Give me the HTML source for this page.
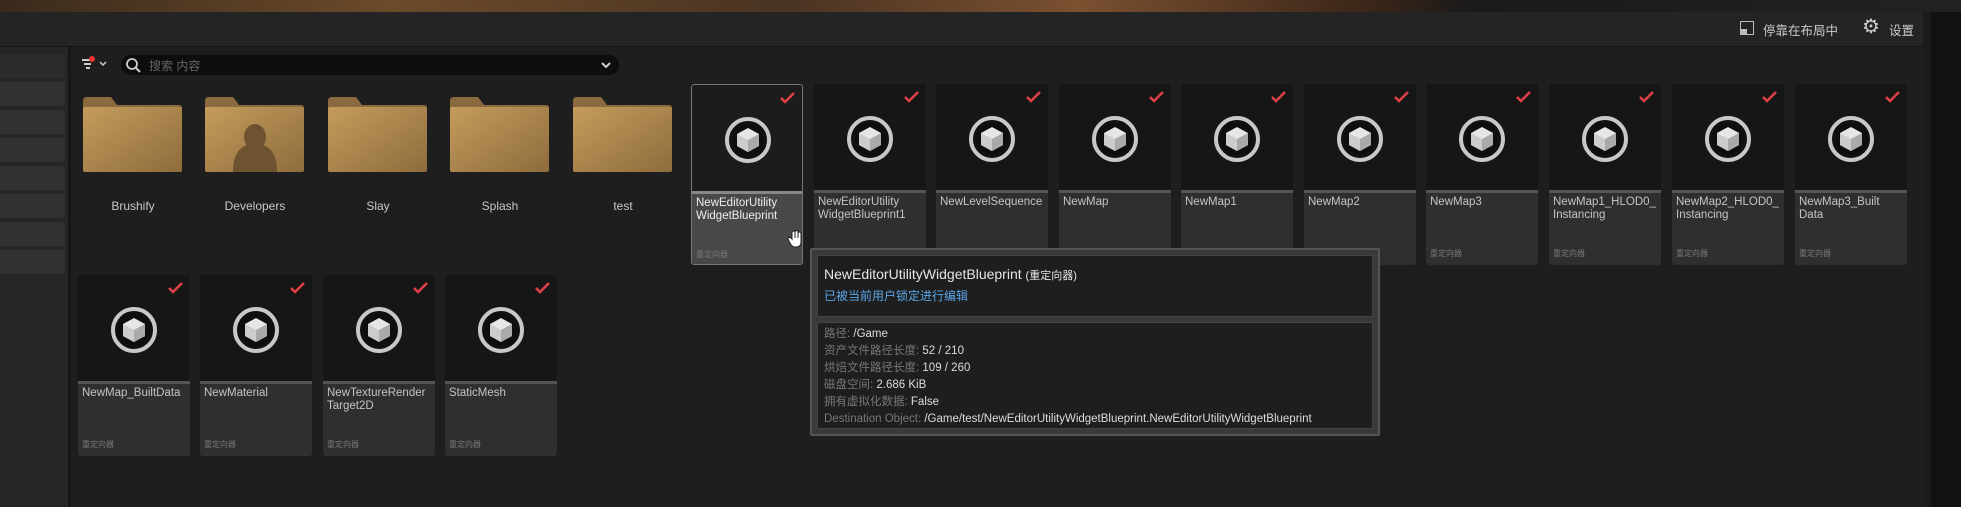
<!DOCTYPE html>
<html><head><meta charset="utf-8"><style>
*{margin:0;padding:0;box-sizing:border-box}
body{width:1961px;height:507px;overflow:hidden;background:#1e1e1e;position:relative;font-family:"Liberation Sans","Noto Sans CJK SC",sans-serif;color:#ccc}
.abs{position:absolute}
.top{left:0;top:0;width:1961px;height:12px;background:linear-gradient(90deg,#3a2a1c,#6b4a2a 20%,#4a3322 40%,#7a5030 55%,#3a2518 70%,#1a1a1a 75%,#222 100%)}
.hdr{left:0;top:12px;width:1923px;height:35px;background:#242424;border-bottom:1px solid #151515}
.right{left:1923px;top:12px;width:38px;height:495px;background:#111}
.side{left:0;top:47px;width:68px;height:460px;background:#262626}
.row{left:0;width:65px;height:24px;background:#313131;border-radius:0 3px 3px 0}
.div{left:68px;top:47px;width:3px;height:460px;background:#161616}
.search{left:121px;top:55px;width:498px;height:20px;background:#0d0d0d;border-radius:10px}
.flab{font-size:12px;color:#c8c8c8;text-align:center;width:100px}
.tile{width:112px;height:181px;background:#161616;border-radius:3px;overflow:hidden}
.tile .bar{position:absolute;left:0;top:106px;width:112px;height:3px;background:#555}
.tile .lab{position:absolute;left:0;top:109px;width:112px;height:72px;background:#2f2f2f;padding:3px 4px;font-size:11.5px;line-height:13px;color:#c4c4c4}
.tile .sm{position:absolute;left:4px;bottom:5px;font-size:8px;color:#777}
.tile .chk{position:absolute;right:6px;top:6px}
.tile .ic{position:absolute;left:33px;top:32px}
.tip{left:810px;top:248px;width:570px;height:188px;background:#3a3a3a;border:2px solid #555;border-radius:2px}
.tip .a{position:absolute;left:5px;top:5px;width:556px;height:62px;background:#1e1e1e;border:1px solid #444}
.tip .b{position:absolute;left:5px;top:72px;width:556px;height:107px;background:#1e1e1e;border:1px solid #444;padding:3px 6px;font-size:11.5px;line-height:17px;color:#ddd}
.g{color:#777}
</style></head><body>
<div class="abs top"></div>
<div class="abs hdr"></div>
<div class="abs right"><div style="position:absolute;left:0;top:0;width:8px;height:495px;background:#1b1b1b"></div></div>
<div class="abs" style="left:1740px;top:21px;width:14px;height:14px;border:1px solid #bbb;background:linear-gradient(#bbb 0 0) 0 7px/6px 6px no-repeat"></div>
<div class="abs" style="left:1763px;top:20px;font-size:12.5px;color:#ccc">停靠在布局中</div>
<div class="abs" style="left:1862px;top:16px;font-size:20px;line-height:22px;color:#ccc">⚙</div>
<div class="abs" style="left:1889px;top:20px;font-size:12.5px;color:#ccc">设置</div>
<div class="abs side"></div>
<div class="abs row" style="top:54px;background:#2b2b2b"></div>
<div class="abs row" style="top:82px"></div><div class="abs row" style="top:110px"></div><div class="abs row" style="top:138px"></div><div class="abs row" style="top:166px"></div><div class="abs row" style="top:194px"></div><div class="abs row" style="top:222px"></div><div class="abs row" style="top:250px"></div>
<div class="abs div"></div>
<svg class="abs" style="left:80px;top:56px" width="34" height="16"><path d="M2 4h10M4 8h7M6 12h4" stroke="#ccc" stroke-width="2"/><circle cx="12" cy="3" r="3" fill="#e33"/><path d="M20 6l3 3 3-3" stroke="#ccc" stroke-width="1.5" fill="none"/></svg>
<div class="abs search"></div>
<svg class="abs" style="left:125px;top:57px" width="16" height="16"><circle cx="7" cy="7" r="5" stroke="#ccc" stroke-width="1.8" fill="none"/><path d="M11 11l4 4" stroke="#ccc" stroke-width="2"/></svg>
<div class="abs" style="left:149px;top:57px;font-size:12px;color:#666">搜索 内容</div>
<svg class="abs" style="left:600px;top:59px" width="12" height="12"><path d="M2 4l4 4 4-4" stroke="#ccc" stroke-width="2" fill="none"/></svg>

<div class="abs" style="left:83px;top:97px">
<svg width="620" height="78">
<defs><linearGradient id="fg" x1="0" y1="0" x2="1" y2="1"><stop offset="0" stop-color="#c49c5c"/><stop offset="1" stop-color="#8e6c3c"/></linearGradient></defs>
<g id="f"><path d="M0 4q0-4 4-4h24l6 8h62q3 0 3 3v61q0 3-3 3H3q-3 0-3-3z" fill="#8a6a3e"/><rect x="0" y="10" width="99" height="65" rx="2" fill="url(#fg)"/></g>
<use href="#f" x="122"/><use href="#f" x="245"/><use href="#f" x="367"/><use href="#f" x="490"/>
<ellipse cx="172" cy="40" rx="11" ry="13" fill="#6e5330"/><path d="M150 75q0-28 22-28t22 28z" fill="#6e5330"/>
</svg></div>
<div class="abs flab" style="left:83px;top:199px">Brushify</div>
<div class="abs flab" style="left:205px;top:199px">Developers</div>
<div class="abs flab" style="left:328px;top:199px">Slay</div>
<div class="abs flab" style="left:450px;top:199px">Splash</div>
<div class="abs flab" style="left:573px;top:199px">test</div>

<svg width="0" height="0" style="position:absolute"><defs>
<g id="cube"><circle cx="23" cy="23" r="21" fill="#0e0e0e" stroke="#c8c8c8" stroke-width="4"/><circle cx="23" cy="23" r="17" fill="none" stroke="#111" stroke-width="2"/><path d="M23 11l11 6v12l-11 6-11-6V17z" fill="#e6e6e6"/><path d="M23 23l11-6v12l-11 6z" fill="#aaa"/><path d="M23 23v12l-11-6V17z" fill="#ccc"/></g>
<g id="chk"><path d="M1 7l4 4 9-9" stroke="#e0404a" stroke-width="2.5" fill="none"/></g>
</defs></svg>

<div class="abs tile" style="left:691px;top:84px;border:1px solid #777;background:#1c1c1c"><div class="bar" style="background:#888"></div><div class="lab" style="background:#484848;color:#eee">NewEditorUtility WidgetBlueprint<div class="sm">重定向器</div></div><svg class="ic" width="46" height="46"><use href="#cube"/></svg><svg class="chk" width="16" height="14"><use href="#chk"/></svg></div>
<div class="abs tile" style="left:814px;top:84px"><div class="bar"></div><div class="lab">NewEditorUtility WidgetBlueprint1<div class="sm">重定向器</div></div><svg class="ic" width="46" height="46"><use href="#cube"/></svg><svg class="chk" width="16" height="14"><use href="#chk"/></svg></div>
<div class="abs tile" style="left:936px;top:84px"><div class="bar"></div><div class="lab">NewLevelSequence<div class="sm">重定向器</div></div><svg class="ic" width="46" height="46"><use href="#cube"/></svg><svg class="chk" width="16" height="14"><use href="#chk"/></svg></div>
<div class="abs tile" style="left:1059px;top:84px"><div class="bar"></div><div class="lab">NewMap<div class="sm">重定向器</div></div><svg class="ic" width="46" height="46"><use href="#cube"/></svg><svg class="chk" width="16" height="14"><use href="#chk"/></svg></div>
<div class="abs tile" style="left:1181px;top:84px"><div class="bar"></div><div class="lab">NewMap1<div class="sm">重定向器</div></div><svg class="ic" width="46" height="46"><use href="#cube"/></svg><svg class="chk" width="16" height="14"><use href="#chk"/></svg></div>
<div class="abs tile" style="left:1304px;top:84px"><div class="bar"></div><div class="lab">NewMap2<div class="sm">重定向器</div></div><svg class="ic" width="46" height="46"><use href="#cube"/></svg><svg class="chk" width="16" height="14"><use href="#chk"/></svg></div>
<div class="abs tile" style="left:1426px;top:84px"><div class="bar"></div><div class="lab">NewMap3<div class="sm">重定向器</div></div><svg class="ic" width="46" height="46"><use href="#cube"/></svg><svg class="chk" width="16" height="14"><use href="#chk"/></svg></div>
<div class="abs tile" style="left:1549px;top:84px"><div class="bar"></div><div class="lab">NewMap1_HLOD0_ Instancing<div class="sm">重定向器</div></div><svg class="ic" width="46" height="46"><use href="#cube"/></svg><svg class="chk" width="16" height="14"><use href="#chk"/></svg></div>
<div class="abs tile" style="left:1672px;top:84px"><div class="bar"></div><div class="lab">NewMap2_HLOD0_ Instancing<div class="sm">重定向器</div></div><svg class="ic" width="46" height="46"><use href="#cube"/></svg><svg class="chk" width="16" height="14"><use href="#chk"/></svg></div>
<div class="abs tile" style="left:1795px;top:84px"><div class="bar"></div><div class="lab">NewMap3_Built Data<div class="sm">重定向器</div></div><svg class="ic" width="46" height="46"><use href="#cube"/></svg><svg class="chk" width="16" height="14"><use href="#chk"/></svg></div>

<div class="abs tile" style="left:78px;top:275px"><div class="bar"></div><div class="lab">NewMap_BuiltData<div class="sm">重定向器</div></div><svg class="ic" width="46" height="46"><use href="#cube"/></svg><svg class="chk" width="16" height="14"><use href="#chk"/></svg></div>
<div class="abs tile" style="left:200px;top:275px"><div class="bar"></div><div class="lab">NewMaterial<div class="sm">重定向器</div></div><svg class="ic" width="46" height="46"><use href="#cube"/></svg><svg class="chk" width="16" height="14"><use href="#chk"/></svg></div>
<div class="abs tile" style="left:323px;top:275px"><div class="bar"></div><div class="lab">NewTextureRender Target2D<div class="sm">重定向器</div></div><svg class="ic" width="46" height="46"><use href="#cube"/></svg><svg class="chk" width="16" height="14"><use href="#chk"/></svg></div>
<div class="abs tile" style="left:445px;top:275px"><div class="bar"></div><div class="lab">StaticMesh<div class="sm">重定向器</div></div><svg class="ic" width="46" height="46"><use href="#cube"/></svg><svg class="chk" width="16" height="14"><use href="#chk"/></svg></div>

<svg class="abs" style="left:787px;top:230px" width="16" height="18"><path d="M5 9V3q0-2 1.5-2T8 3v5V2q0-1.5 1.5-1.5T11 2v6V3.5q0-1.5 1.5-1.5T14 3.5V12q0 5-5 5H8q-3 0-5-4L1 9q0-1.5 1.5-1.5T5 9z" fill="#fff" stroke="#222" stroke-width="1"/></svg>

<div class="abs tip">
<div class="a"><div style="position:absolute;left:6px;top:10px;font-size:14px;color:#e6e6e6">NewEditorUtilityWidgetBlueprint <span style="font-size:11px">(重定向器)</span></div>
<div style="position:absolute;left:6px;top:31px;font-size:12px;color:#5aa6e8">已被当前用户锁定进行编辑</div></div>
<div class="b"><span class="g">路径:</span> /Game<br><span class="g">资产文件路径长度:</span> 52 / 210<br><span class="g">烘焙文件路径长度:</span> 109 / 260<br><span class="g">磁盘空间:</span> 2.686 KiB<br><span class="g">拥有虚拟化数据:</span> False<br><span class="g">Destination Object:</span> /Game/test/NewEditorUtilityWidgetBlueprint.NewEditorUtilityWidgetBlueprint</div>
</div>
</body></html>
